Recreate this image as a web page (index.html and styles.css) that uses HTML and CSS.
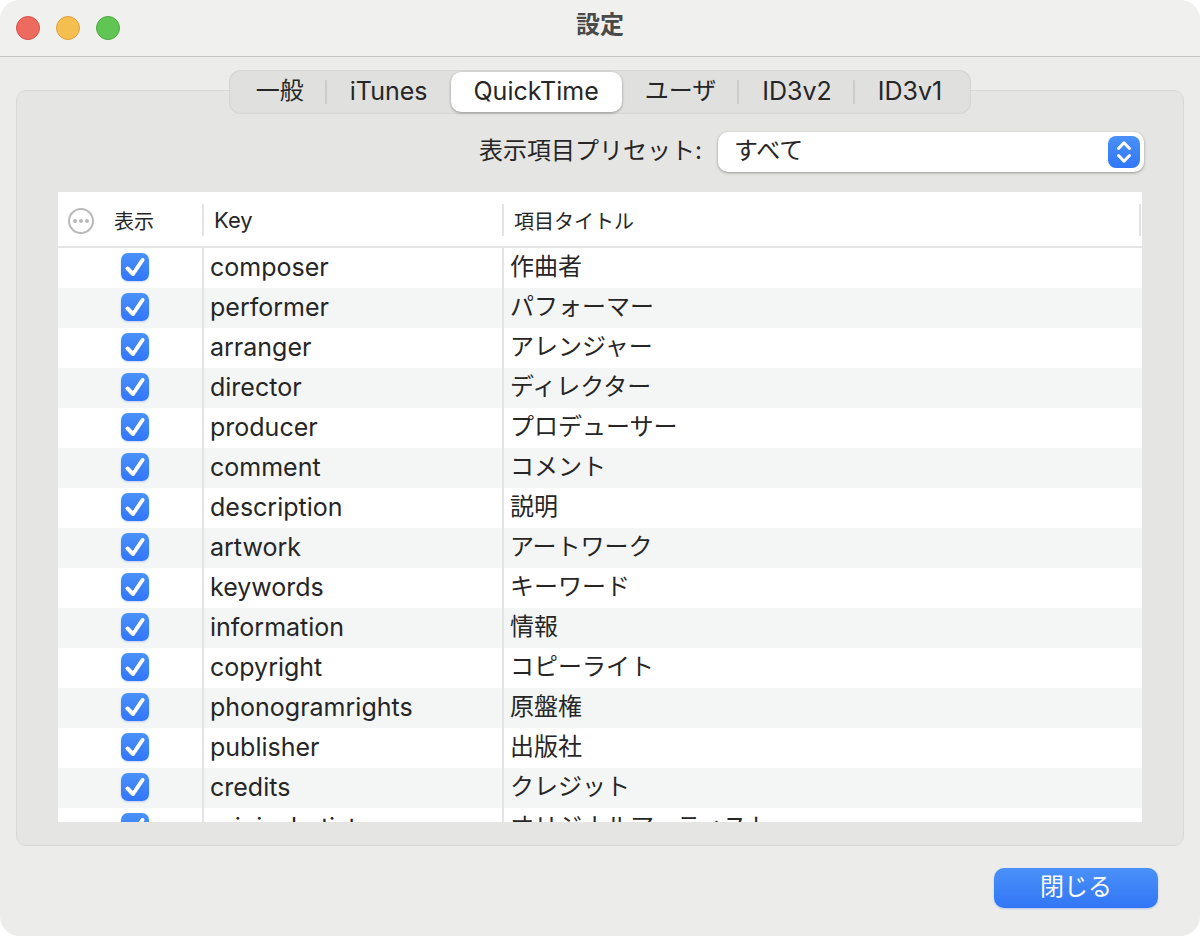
FILE: index.html
```
<!DOCTYPE html>
<html lang="ja">

<head>
    <meta charset="UTF-8">
    <meta name="viewport" content="width=device-width, initial-scale=1.0">
    <title>設定</title>
    <link rel="stylesheet" href="styles.css">
</head>

<body>
    <div class="window">
        <header class="titlebar">
            <div class="lights">
                <button class="light red" aria-label="Close"></button>
                <button class="light yellow" aria-label="Minimize"></button>
                <button class="light green" aria-label="Zoom"></button>
            </div>
            <h1>設定</h1>
        </header>

        <main class="content">
            <div class="tabs" role="tablist">
                <button class="tab divider" role="tab">一般</button>
                <button class="tab latin" role="tab">iTunes</button>
                <button class="tab latin selected" role="tab" aria-selected="true">QuickTime</button>
                <button class="tab divider" role="tab">ユーザ</button>
                <button class="tab latin divider" role="tab">ID3v2</button>
                <button class="tab latin" role="tab">ID3v1</button>
            </div>

            <section class="panel">
                <div class="preset">
                    <label for="preset">表示項目プリセット:</label>
                    <div class="popup">
                        <select id="preset">
                            <option>すべて</option>
                        </select>
                        <svg class="popup-arrows" viewBox="0 0 32 32" aria-hidden="true">
                            <path d="M10.5 12.5 16 6.8l5.500 5.700M10.500 19.500 16 25.200l5.500-5.700" />
                        </svg>
                    </div>
                </div>

                <div class="table-wrap">
                    <table>
                        <colgroup>
                            <col class="col-menu">
                            <col class="col-show">
                            <col class="col-key">
                            <col>
                        </colgroup>
                        <thead>
                            <tr>
                                <th class="menu">
                                    <svg viewBox="0 0 26 26" aria-hidden="true">
                                        <circle class="ring" cx="13" cy="13" r="12" />
                                        <circle cx="7" cy="13" r="2" />
                                        <circle cx="13" cy="13" r="2" />
                                        <circle cx="19" cy="13" r="2" />
                                    </svg>
                                </th>
                                <th class="show">表示</th>
                                <th class="key">Key</th>
                                <th class="title">項目タイトル</th>
                            </tr>
                        </thead>
                        <tbody id="rows"></tbody>
                    </table>
                </div>
            </section>
        </main>

        <footer>
            <button class="close">閉じる</button>
        </footer>
    </div>

    <script>
        var items = [
            ['composer', '作曲者'],
            ['performer', 'パフォーマー'],
            ['arranger', 'アレンジャー'],
            ['director', 'ディレクター'],
            ['producer', 'プロデューサー'],
            ['comment', 'コメント'],
            ['description', '説明'],
            ['artwork', 'アートワーク'],
            ['keywords', 'キーワード'],
            ['information', '情報'],
            ['copyright', 'コピーライト'],
            ['phonogramrights', '原盤権'],
            ['publisher', '出版社'],
            ['credits', 'クレジット'],
            ['originalartist', 'オリジナルアーティスト']
        ];

        var rows = document.getElementById('rows');

        items.forEach(function (item) {
            var row = document.createElement('tr');
            row.innerHTML =
                '<td></td>' +
                '<td class="show"><label class="check">' +
                '<input type="checkbox" id="show-' + item[0] + '" aria-label="' + item[0] + '" checked>' +
                '<svg viewBox="0 0 28 28" aria-hidden="true"><path d="M6.500 15.500 12 21 21.500 7" /></svg>' +
                '</label></td>' +
                '<td class="key">' + item[0] + '</td>' +
                '<td class="title">' + item[1] + '</td>';
            rows.appendChild(row);
        });
    </script>
</body>

</html>
```
FILE: styles.css
```
* {
    box-sizing: border-box;
}

body {
    margin: 0;
    background: #fff;
    color: #262626;
    font-family: Inter, "Noto Sans CJK JP", sans-serif;
    font-size: 24px;
}

button,
select {
    font: inherit;
    color: inherit;
    border: none;
    margin: 0;
}

.window {
    display: flex;
    flex-direction: column;
    height: 100vh;
    background: #ececea;
    border-radius: 20px;
    overflow: hidden;
}

.titlebar {
    display: grid;
    grid-template-columns: 1fr auto 1fr;
    align-items: center;
    height: 57px;
    padding: 0 16px;
    background: #f0f0ee;
    border-bottom: 1px solid #c4c4c2;
}

.titlebar h1 {
    margin: 0;
    padding-bottom: 6px;
    color: #4a4a49;
    font-size: 24px;
    line-height: 32px;
}

.lights {
    display: flex;
    gap: 16px;
}

.light {
    width: 24px;
    height: 24px;
    padding: 0;
    border-radius: 50%;
}

.red {
    background: #ed6a5f;
    border: 1px solid #d5524a;
}

.yellow {
    background: #f5bf4f;
    border: 1px solid #d9a13f;
}

.green {
    background: #61c554;
    border: 1px solid #4ea73f;
}

.content {
    flex: 1;
    min-height: 0;
    display: flex;
    flex-direction: column;
    padding: 13px 16px 0;
}

.tabs {
    position: relative;
    z-index: 1;
    align-self: center;
    display: flex;
    height: 44px;
    margin-bottom: -24px;
    padding: 2px 6px 2px 4px;
    background: #e0e0de;
    border-radius: 12px;
    box-shadow: inset 0 0 2px #bdbdbb;
}

.tab {
    padding: 0 23px 2px;
    background: none;
    border-radius: 10px;
    line-height: 36px;
}

.latin {
    font-size: 25px;
}

.divider {
    background: linear-gradient(#cbcbc9, #cbcbc9) no-repeat right center / 2px 24px;
}

.selected {
    background: #fff;
    box-shadow: 0 1px 3px rgba(0, 0, 0, 0.35);
}

.panel {
    flex: 1;
    min-height: 0;
    display: flex;
    flex-direction: column;
    padding: 41px 41px 23px;
    background: #e5e5e3;
    border: 1px solid #d9d9d7;
    border-radius: 10px;
}

.preset {
    display: flex;
    justify-content: flex-end;
    gap: 16px;
    line-height: 38px;
}

.popup {
    position: relative;
    width: 426px;
    margin-right: -2px;
}

.popup select {
    appearance: none;
    display: block;
    width: 100%;
    height: 40px;
    padding: 0 48px 2px 16px;
    background: #fff;
    border-radius: 10px;
    box-shadow: 0 1px 3px rgba(0, 0, 0, 0.35);
}

.popup-arrows {
    position: absolute;
    top: 4px;
    right: 4px;
    width: 32px;
    height: 32px;
    background: linear-gradient(#4a91f8, #3176f6);
    border-radius: 8px;
    pointer-events: none;
}

.popup-arrows path,
.check path {
    fill: none;
    stroke: #fff;
    stroke-width: 3;
    stroke-linecap: round;
    stroke-linejoin: round;
}

.table-wrap {
    flex: 1;
    min-height: 0;
    margin-top: 20px;
    background: #fff;
    overflow-y: auto;
    scrollbar-width: none;
}

table {
    width: 100%;
    table-layout: fixed;
    border-collapse: separate;
    border-spacing: 0;
}

.col-menu {
    width: 50px;
}

.col-show {
    width: 96px;
}

.col-key {
    width: 300px;
}

th {
    position: sticky;
    top: 0;
    z-index: 1;
    height: 56px;
    padding: 2px 0 0 10px;
    background: linear-gradient(#e4e4e4, #e4e4e4) no-repeat right 0 top 12px / 2px 32px #fff;
    border-bottom: 2px solid #e4e4e4;
    font-size: 20px;
    font-weight: normal;
    text-align: left;
}

th.menu {
    background: #fff;
}

th.menu svg {
    display: block;
    width: 26px;
    height: 26px;
    margin-top: 2px;
    fill: #b9b9b9;
}

th.menu .ring {
    fill: none;
    stroke: #b9b9b9;
    stroke-width: 2;
}

th.show {
    padding-left: 6px;
}

th.key {
    font-size: 22px;
}

th.title {
    background-position: right 1px top 12px;
}

td {
    height: 40px;
    padding: 0 0 2px 6px;
    line-height: 36px;
    white-space: nowrap;
}

td.show {
    padding-left: 13px;
}

td.show,
td.key {
    border-right: 2px solid #e4e4e4;
}

td.key {
    font-size: 25px;
}

tbody tr:nth-child(even) {
    background: #f4f5f5;
}

.check {
    position: relative;
    display: block;
    width: 28px;
    height: 28px;
}

.check input {
    appearance: none;
    display: block;
    width: 28px;
    height: 28px;
    margin: 0;
    background: #fff;
    border: 1px solid #c4c4c2;
    border-radius: 7px;
}

.check input:checked {
    background: linear-gradient(#4a91f8, #3176f6);
    border: none;
    box-shadow: 0 1px 2px rgba(49, 118, 246, 0.3);
}

.check svg {
    position: absolute;
    inset: 0;
    pointer-events: none;
}

.check path {
    stroke-width: 4;
}

footer {
    display: flex;
    justify-content: flex-end;
    padding: 22px 42px 28px;
}

.close {
    width: 164px;
    height: 40px;
    padding: 0 0 2px;
    background: linear-gradient(#4a91f8, #3176f6);
    border-radius: 10px;
    box-shadow: 0 1px 2px rgba(49, 118, 246, 0.3);
    color: #fff;
    line-height: 36px;
}
```
